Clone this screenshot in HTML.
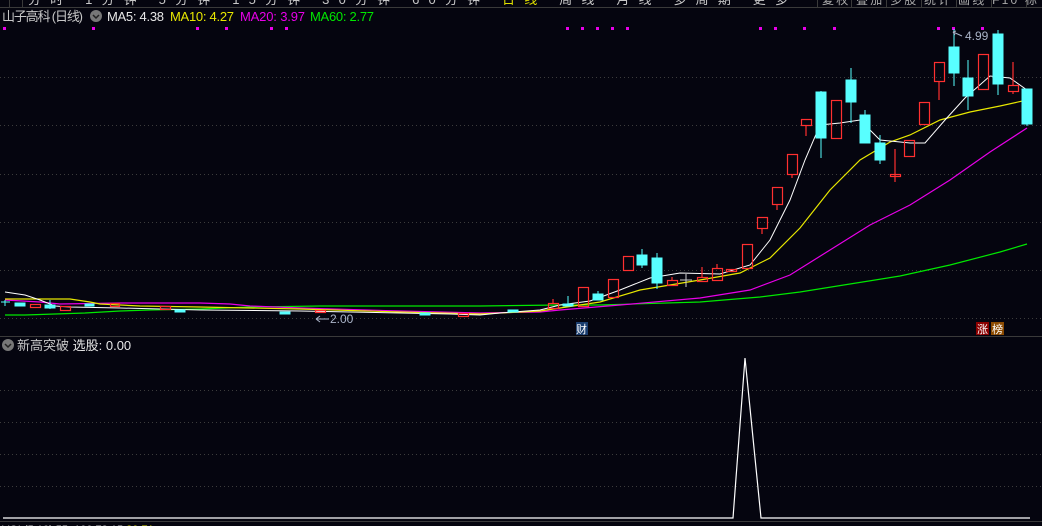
<!DOCTYPE html>
<html><head><meta charset="utf-8"><style>
html,body{margin:0;padding:0;background:#05050f;width:1042px;height:526px;overflow:hidden;font-family:"Liberation Sans","Noto Sans CJK SC",sans-serif}
svg{position:absolute;left:0;top:0}
</style></head><body>
<svg width="1042" height="526" viewBox="0 0 1042 526" xmlns="http://www.w3.org/2000/svg" font-family="Liberation Sans, Noto Sans CJK SC, sans-serif">
<rect width="1042" height="526" fill="#05050f"/>
<text x="28" y="4" font-size="13" fill="#c8c8c8" textLength="760">分时 1分钟 5分钟 15分钟 30分钟 60分钟 <tspan fill="#e0e000">日线</tspan> 周线 月线 多周期 更多</text>
<line x1="0" y1="7.5" x2="1042" y2="7.5" stroke="#3a3a3a"/>
<rect x="790" y="0" width="252" height="7" fill="#05050f"/>
<g stroke="#3a3a3a"><line x1="817.5" y1="0" x2="817.5" y2="7"/><line x1="851.5" y1="0" x2="851.5" y2="7"/><line x1="886.5" y1="0" x2="886.5" y2="7"/><line x1="921.5" y1="0" x2="921.5" y2="7"/><line x1="956.5" y1="0" x2="956.5" y2="7"/><line x1="991.5" y1="0" x2="991.5" y2="7"/><line x1="1026.5" y1="0" x2="1026.5" y2="7"/><line x1="9.5" y1="0" x2="9.5" y2="7"/><line x1="22.5" y1="0" x2="22.5" y2="7"/></g>
<text x="822" y="4" font-size="12" fill="#aaa" textLength="215">复权 叠加 多股 统计 画线 F10 标</text>
<text x="2" y="21" font-size="13" fill="#c8c8c8" textLength="81">山子高科 (日线)</text>
<circle cx="96" cy="16" r="6" fill="#777"/><path d="M93 15 L96 18 L99 15" stroke="#222" stroke-width="1.5" fill="none"/>
<text x="107" y="21" font-size="13" fill="#e8e8e8" textLength="57">MA5: 4.38</text>
<text x="170" y="21" font-size="13" fill="#e8e800" textLength="64">MA10: 4.27</text>
<text x="240" y="21" font-size="13" fill="#e800e8" textLength="65">MA20: 3.97</text>
<text x="310" y="21" font-size="13" fill="#00e800" textLength="64">MA60: 2.77</text>
<g fill="#e800e8">
<rect x="3" y="27" width="3" height="3"/><rect x="92" y="27" width="3" height="3"/><rect x="196" y="27" width="3" height="3"/><rect x="225" y="27" width="3" height="3"/><rect x="270" y="27" width="3" height="3"/><rect x="285" y="27" width="3" height="3"/>
<rect x="566" y="27" width="3" height="3"/><rect x="581" y="27" width="3" height="3"/><rect x="596" y="27" width="3" height="3"/><rect x="611" y="27" width="3" height="3"/><rect x="626" y="27" width="3" height="3"/>
<rect x="759" y="27" width="3" height="3"/><rect x="774" y="27" width="3" height="3"/><rect x="803" y="27" width="3" height="3"/><rect x="833" y="27" width="3" height="3"/>
<rect x="937" y="27" width="3" height="3"/><rect x="952" y="27" width="3" height="3"/><rect x="981" y="27" width="3" height="3"/>
</g>
<g stroke="#3c3c3c" stroke-dasharray="1,3">
<line x1="0" y1="77.5" x2="1042" y2="77.5"/><line x1="0" y1="125.5" x2="1042" y2="125.5"/><line x1="0" y1="174.5" x2="1042" y2="174.5"/><line x1="0" y1="222.5" x2="1042" y2="222.5"/><line x1="0" y1="270.5" x2="1042" y2="270.5"/><line x1="0" y1="318.5" x2="1042" y2="318.5"/>
<line x1="0" y1="390.5" x2="1042" y2="390.5"/><line x1="0" y1="422.5" x2="1042" y2="422.5"/><line x1="0" y1="454.5" x2="1042" y2="454.5"/><line x1="0" y1="486.5" x2="1042" y2="486.5"/>
</g>
<polyline fill="none" stroke="#00e800" stroke-width="1.2" points="5,315 25,315 55,314 85,313 120,311 150,310 200,309 250,307 320,306 400,306 480,306 560,305 600,305 700,302 760,297 800,292 850,284 900,276 950,265 1000,252 1027,244"/>
<polyline fill="none" stroke="#e800e8" stroke-width="1.2" points="5,300 40,302 60,304 120,303 200,303 230,304 250,306 300,308 400,311 480,313 540,312 560,310 620,305 700,298 750,290 790,275 830,250 870,225 910,205 950,180 990,152 1027,128"/>
<polyline fill="none" stroke="#e8e800" stroke-width="1.2" points="5,299 70,299 90,302 100,304 140,306 200,307 300,309 400,312 480,314 540,311 560,308 600,302 640,290 700,280 740,273 770,258 800,228 830,190 860,160 890,142 910,135 940,120 970,112 1000,106 1027,100"/>
<polyline fill="none" stroke="#ffffff" stroke-width="1" points="5,292 25,295 40,300 55,306 70,307 120,308 200,310 300,311 400,313 450,314 480,315 500,313 540,310 560,305 590,301 620,290 650,278 680,273 720,274 750,265 770,240 790,200 805,160 820,125 840,123 860,120 880,140 910,143 925,143 945,120 965,98 990,76 1010,78 1027,90"/>
<g stroke="#58ffff" fill="#58ffff">
<line x1="5" y1="300" x2="5" y2="306"/><line x1="1" y1="302" x2="10" y2="302"/>
<rect x="15" y="303" width="10" height="3"/><rect x="45" y="305" width="10" height="3"/><line x1="50" y1="300" x2="50" y2="309"/>
<rect x="85" y="304" width="9" height="2"/><rect x="175" y="310" width="10" height="2"/><rect x="280" y="312" width="10" height="2"/><rect x="420" y="313" width="10" height="2"/><rect x="508" y="310" width="10" height="2"/>
<rect x="563" y="304" width="10" height="2"/><line x1="568" y1="296" x2="568" y2="306"/>
<rect x="593" y="294" width="10" height="6"/><line x1="598" y1="291" x2="598" y2="300"/>
<rect x="637" y="255" width="10" height="10"/><line x1="642" y1="249" x2="642" y2="268"/>
<rect x="652" y="258" width="10" height="25"/><line x1="657" y1="253" x2="657" y2="289"/>
<line x1="821" y1="91" x2="821" y2="158"/><rect x="816" y="92" width="10" height="46"/>
<line x1="851" y1="68" x2="851" y2="123"/><rect x="846" y="80" width="10" height="22"/>
<rect x="860" y="115" width="10" height="28"/><line x1="865" y1="110" x2="865" y2="115"/>
<line x1="880" y1="135" x2="880" y2="164"/><rect x="875" y="143" width="10" height="17"/>
<line x1="954" y1="29" x2="954" y2="86"/><rect x="949" y="47" width="10" height="26"/>
<line x1="968" y1="60" x2="968" y2="110"/><rect x="963" y="78" width="10" height="18"/>
<line x1="998" y1="30" x2="998" y2="95"/><rect x="993" y="34" width="10" height="50"/>
<rect x="1022" y="89" width="10" height="35"/><line x1="1027" y1="124" x2="1027" y2="126"/>
</g>
<g stroke="#ff3030" fill="none" stroke-width="1.2">
<rect x="30.5" y="304.5" width="10" height="3"/><rect x="60.5" y="306.5" width="10" height="4"/><rect x="110.5" y="303.5" width="9" height="3"/>
<rect x="160.5" y="306.5" width="10" height="3"/><rect x="315.5" y="310.5" width="10" height="2"/><rect x="458.5" y="313.5" width="10" height="3"/>
<rect x="548.5" y="303.5" width="10" height="5"/><line x1="553" y1="299" x2="553" y2="303"/>
<rect x="578.5" y="287.5" width="10" height="19"/><rect x="608.5" y="279.5" width="10" height="18"/><rect x="623.5" y="256.5" width="10" height="14"/>
<rect x="667.5" y="280.5" width="10" height="5"/><line x1="672" y1="277" x2="672" y2="280"/>
<rect x="697.5" y="277.5" width="10" height="4"/><line x1="702" y1="267" x2="702" y2="277"/>
<rect x="712.5" y="268.5" width="10" height="12"/><line x1="717" y1="264" x2="717" y2="268"/>
<rect x="726.5" y="269.5" width="10" height="2"/>
<rect x="742.5" y="244.5" width="10" height="24"/>
<rect x="757.5" y="217.5" width="10" height="11"/><line x1="762" y1="228" x2="762" y2="234"/>
<rect x="772.5" y="187.5" width="10" height="17"/><line x1="777" y1="204" x2="777" y2="210"/>
<rect x="787.5" y="154.5" width="10" height="20"/><line x1="792" y1="174" x2="792" y2="178"/>
<rect x="801.5" y="119.5" width="10" height="6"/><line x1="806" y1="125" x2="806" y2="136"/>
<rect x="831.5" y="100.5" width="10" height="38"/>
<rect x="890.5" y="174.5" width="10" height="2"/><line x1="895" y1="149" x2="895" y2="182"/>
<rect x="904.5" y="140.5" width="10" height="16"/>
<rect x="919.5" y="102.5" width="10" height="22"/>
<rect x="934.5" y="62.5" width="10" height="19"/><line x1="939" y1="81" x2="939" y2="100"/>
<rect x="978.5" y="54.5" width="10" height="35"/>
<rect x="1008.5" y="85.5" width="10" height="6"/><line x1="1013" y1="62" x2="1013" y2="85"/><line x1="1013" y1="91" x2="1013" y2="94"/>
</g>
<g stroke="#ccc"><line x1="686" y1="274" x2="686" y2="287"/><line x1="680" y1="280" x2="692" y2="280"/></g>
<text x="965" y="40" font-size="12" fill="#aab4c8">4.99</text>
<path d="M962 36 L953 32 M953 32 L956 31 M953 32 L955 35" stroke="#aab4c8" fill="none"/>
<text x="330" y="323" font-size="12" fill="#aab4c8">2.00</text>
<path d="M316 319 L329 319 M316 319 L320 316 M316 319 L320 322" stroke="#aab4c8" fill="none"/>
<rect x="576" y="322" width="12" height="13" fill="#1a3d6e"/><text x="576" y="333" font-size="11" fill="#fff">财</text>
<rect x="976" y="322" width="13" height="13" fill="#8b0000"/><text x="977" y="333" font-size="11" fill="#fff">涨</text>
<rect x="991" y="322" width="13" height="13" fill="#8b4a00"/><text x="992" y="333" font-size="11" fill="#fff">榜</text>
<line x1="0" y1="336.5" x2="1042" y2="336.5" stroke="#3a3a3a"/>
<circle cx="8" cy="345" r="6" fill="#777"/><path d="M5 344 L8 347 L11 344" stroke="#222" stroke-width="1.5" fill="none"/>
<text x="17" y="350" font-size="13" fill="#c8c8c8">新高突破 <tspan fill="#e8e8e8">选股: 0.00</tspan></text>
<polyline fill="none" stroke="#fff" stroke-width="1.2" points="3,518 733,518 745,358 761,518 1030,518"/>
<line x1="0" y1="521.5" x2="1042" y2="521.5" stroke="#3a3a3a"/>
<text x="2" y="533" font-size="11" fill="#c8c8c8">VOL(5,10) 55: 100 73.15 <tspan fill="#e8e800">30.71</tspan></text>
</svg>
</body></html>
